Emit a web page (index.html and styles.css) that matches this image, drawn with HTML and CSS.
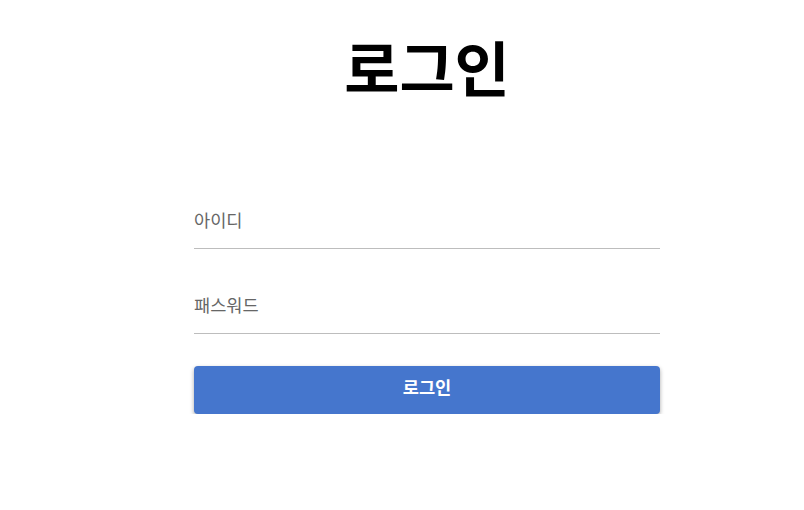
FILE: index.html
```html
<!DOCTYPE html>
<html lang="ko">
<head>
  <meta charset="UTF-8" />
  <meta name="viewport" content="width=device-width, initial-scale=1.0" />
  <title>로그인</title>
  <link rel="stylesheet" href="styles.css">
</head>
<body>
  <div class="wrap">
    <h1 class="title">로그인</h1>
    <form class="login-form">
      <input class="field" type="text" placeholder="아이디" />
      <input class="field" type="password" placeholder="패스워드" />
      <button class="login-btn" type="button">로그인</button>
    </form>
  </div>
</body>
</html>
```

FILE: styles.css
```css
body {
  margin: 0;
  font-family: "Noto Sans CJK KR", "Noto Sans", sans-serif;
  background: #fff;
}
.wrap {
  width: 466px;
  margin-left: 194px;
}
.title {
  margin: 24px 0 0;
  text-align: center;
  font-size: 60px;
  font-weight: 700;
  line-height: 84px;
  color: #000;
}
.login-form {
  margin-top: 91px;
  display: flex;
  flex-direction: column;
}
.field {
  font-family: inherit;
  font-size: 17.6px;
  line-height: 25px;
  border: none;
  border-bottom: 1px solid #bdbdbd;
  padding: 8px 0 16px;
  margin-bottom: 35px;
  outline: none;
  color: #333;
}
.field::placeholder {
  color: #666;
}
.field + .field {
  margin-bottom: 32px;
}
.login-btn {
  height: 48px;
  padding: 0 0 8px;
  border: none;
  border-radius: 4px;
  background: #4576cd;
  color: #fff;
  font-family: inherit;
  font-size: 17.6px;
  font-weight: 700;
  box-shadow: 0 2px 4px rgba(0, 0, 0, 0.35);
  cursor: pointer;
}
```
